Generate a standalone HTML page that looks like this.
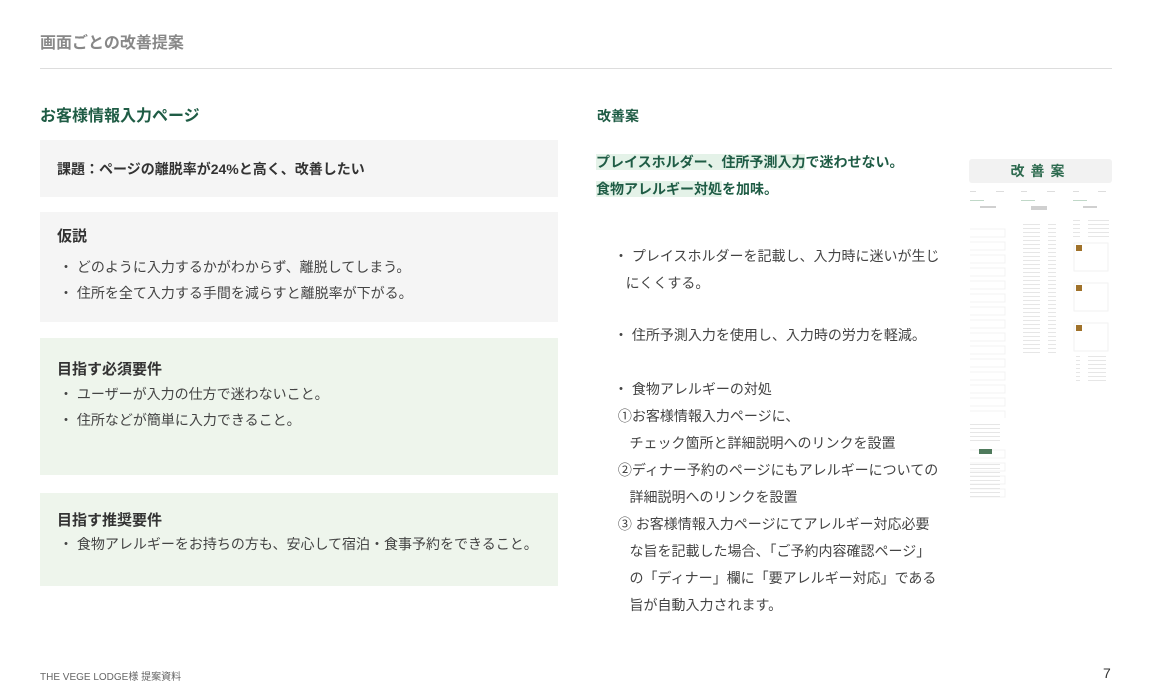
<!DOCTYPE html>
<html><head><meta charset="utf-8"><style>
*{margin:0;padding:0;box-sizing:border-box}
body{width:1152px;height:700px;background:#fff;position:relative;overflow:hidden;font-family:"Liberation Sans","Noto Sans CJK JP",sans-serif;color:#333}
.a{position:absolute;white-space:nowrap}
.box{position:absolute;left:40px;width:518px}
.li{font-size:14px;color:#444;line-height:26px}
.h{font-size:15px;font-weight:bold;color:#333}
.hl{background:#e4f2e8}
</style></head><body>
<div class="a" style="left:40px;top:29px;font-size:16px;font-weight:bold;color:#888">画面ごとの改善提案</div>
<div class="a" style="left:40px;top:68px;width:1072px;height:1px;background:#ddd"></div>
<div class="a" style="left:40px;top:102px;font-size:16px;font-weight:bold;color:#1f5c45">お客様情報入力ページ</div>

<div class="box" style="top:140px;height:57px;background:#f5f5f5"><div class="a" style="left:17px;top:19px;font-size:14px;font-weight:bold;color:#333">課題：ページの離脱率が24%と高く、改善したい</div></div>
<div class="box" style="top:212px;height:110px;background:#f5f5f5">
<div class="a h" style="left:17px;top:13px">仮説</div>
<div class="a li" style="left:19px;top:42px">・ どのように入力するかがわからず、離脱してしまう。<br>・ 住所を全て入力する手間を減らすと離脱率が下がる。</div></div>
<div class="box" style="top:338px;height:137px;background:#eef5ec">
<div class="a h" style="left:17px;top:20px">目指す必須要件</div>
<div class="a li" style="left:19px;top:43px">・ ユーザーが入力の仕方で迷わないこと。<br>・ 住所などが簡単に入力できること。</div></div>
<div class="box" style="top:493px;height:93px;background:#eef5ec">
<div class="a h" style="left:17px;top:16px">目指す推奨要件</div>
<div class="a li" style="left:19px;top:38px">・ 食物アレルギーをお持ちの方も、安心して宿泊・食事予約をできること。</div></div>

<div class="a" style="left:597px;top:106px;font-size:14px;font-weight:bold;color:#1f5c45">改善案</div>
<div class="a" style="left:596px;top:149px;font-size:14px;font-weight:bold;color:#1f5c45;line-height:27px"><span class="hl">プレイスホルダー、</span><span class="hl">住所予測入力</span>で迷わせない。<br><span class="hl">食物アレルギー対処</span>を加味。</div>
<div class="a" style="left:614px;top:243px;font-size:14px;color:#444;line-height:27px">・ プレイスホルダーを記載し、入力時に迷いが生じ<br>&nbsp;&nbsp;&nbsp;にくくする。</div>
<div class="a" style="left:614px;top:322px;font-size:14px;color:#444;line-height:27px">・ 住所予測入力を使用し、入力時の労力を軽減。</div>
<div class="a" style="left:614px;top:376px;font-size:14px;color:#444;line-height:27px">・ 食物アレルギーの対処<br>&nbsp;①お客様情報入力ページに、<br>&nbsp;&nbsp;&nbsp;&nbsp;チェック箇所と詳細説明へのリンクを設置<br>&nbsp;②ディナー予約のページにもアレルギーについての<br>&nbsp;&nbsp;&nbsp;&nbsp;詳細説明へのリンクを設置<br>&nbsp;③ お客様情報入力ページにてアレルギー対応必要<br>&nbsp;&nbsp;&nbsp;&nbsp;な旨を記載した場合、「ご予約内容確認ページ」<br>&nbsp;&nbsp;&nbsp;&nbsp;の「ディナー」欄に「要アレルギー対応」である<br>&nbsp;&nbsp;&nbsp;&nbsp;旨が自動入力されます。</div>

<div class="a" style="left:969px;top:159px;width:143px;height:24px;background:#f2f2f2;border-radius:3px;text-align:center;font-size:14px;font-weight:bold;color:#2d6a4f;line-height:24px;letter-spacing:6px">改善案</div>
<svg class="a" style="left:968px;top:188px" width="146" height="320">
<defs>
<pattern id="t" width="40" height="4" patternUnits="userSpaceOnUse"><rect x="0" y="0" width="32" height="1" fill="#e6e6e6"/></pattern>
<pattern id="f" width="40" height="13" patternUnits="userSpaceOnUse"><rect x="1" y="2" width="36" height="8" fill="none" stroke="#f0f0f0" stroke-width="0.8"/></pattern>
</defs>
<g fill="#ddd"><rect x="2" y="3" width="6" height="1"/><rect x="28" y="3" width="8" height="1"/><rect x="53" y="3" width="6" height="1"/><rect x="79" y="3" width="8" height="1"/><rect x="105" y="3" width="6" height="1"/><rect x="130" y="3" width="8" height="1"/></g>
<g fill="#c0d8c8"><rect x="2" y="12" width="14" height="1"/><rect x="53" y="12" width="14" height="1"/><rect x="105" y="12" width="14" height="1"/></g>
<rect x="12" y="18" width="16" height="2" fill="#d0d0d0"/><rect x="63" y="18" width="16" height="4" fill="#d0d0d0"/><rect x="115" y="18" width="14" height="2" fill="#d0d0d0"/>
<rect x="2" y="40" width="38" height="190" fill="url(#f)"/>
<rect x="2" y="235" width="38" height="20" fill="url(#t)"/>
<rect x="2" y="260" width="38" height="50" fill="url(#f)"/>
<rect x="11" y="261" width="13" height="5" fill="#4f7a5c"/>
<rect x="2" y="275" width="38" height="35" fill="url(#t)"/>
<rect x="55" y="35" width="33" height="130" fill="url(#t)"/>
<rect x="105" y="30" width="36" height="20" fill="url(#t)"/>
<g><rect x="106" y="55" width="34" height="28" fill="none" stroke="#f2f2f2"/><rect x="108" y="57" width="6" height="6" fill="#a0722a"/>
<rect x="106" y="95" width="34" height="28" fill="none" stroke="#f2f2f2"/><rect x="108" y="97" width="6" height="6" fill="#a0722a"/>
<rect x="106" y="135" width="34" height="28" fill="none" stroke="#f2f2f2"/><rect x="108" y="137" width="6" height="6" fill="#a0722a"/></g>
<rect x="108" y="165" width="30" height="30" fill="url(#t)"/>
</svg>

<div class="a" style="left:40px;top:668px;font-size:10px;color:#666">THE VEGE LODGE様 提案資料</div>
<div class="a" style="left:1103px;top:665px;font-size:14px;color:#333">7</div>
</body></html>
